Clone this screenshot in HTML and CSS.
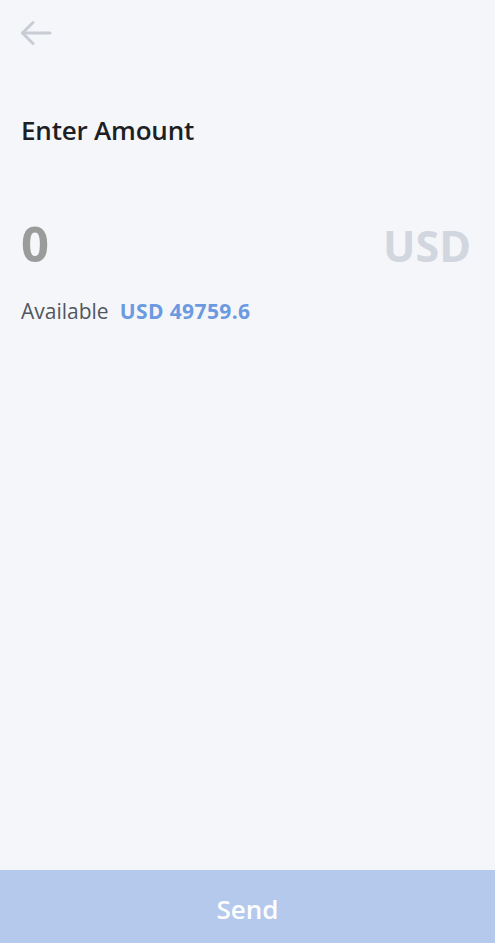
FILE: index.html
```html
<!DOCTYPE html>
<html>
<head>
<meta charset="utf-8">
<link rel="stylesheet" href="styles.css">
</head>
<body>
<div class="screen">
  <header class="top">
    <button class="back" aria-label="Back">
      <svg width="34" height="28" viewBox="0 0 34 28" fill="none" stroke="#c9ccd5" stroke-width="3" stroke-linecap="round" stroke-linejoin="round">
        <path d="M31 14H3.5"/>
        <path d="M14 3.5L3.5 14L14 24.5"/>
      </svg>
    </button>
  </header>
  <main class="content">
    <h1 class="title">Enter Amount</h1>
    <div class="amount-row">
      <span class="amount">0</span>
      <span class="currency">USD</span>
    </div>
    <p class="available"><span class="label">Available</span><span class="value">USD 49759.6</span></p>
  </main>
  <button class="send">Send</button>
</div>
</body>
</html>
```
FILE: styles.css
```css
html, body {
  margin: 0;
  padding: 0;
  height: 100%;
}
body {
  background: #f5f6fa;
  font-family: "Open Sans", "Noto Sans", sans-serif;
}
.screen {
  display: flex;
  flex-direction: column;
  height: 943px;
}
.top {
  padding: 19px 0 0 19px;
  height: 46px;
  box-sizing: border-box;
}
.back {
  border: 0;
  background: none;
  padding: 0;
  display: block;
}
.content {
  flex: 1;
  padding: 0 24px 0 21px;
}
.title {
  margin: 68px 0 0;
  font-size: 26px;
  line-height: 32px;
  font-weight: 600;
  color: #1d1f25;
  letter-spacing: -0.2px;
}
.amount-row {
  display: flex;
  justify-content: space-between;
  align-items: baseline;
  margin-top: 73px;
  line-height: 1;
}
.amount {
  font-size: 49px;
  font-weight: 700;
  color: #9b9b9b;
}
.currency {
  font-size: 43px;
  font-weight: 700;
  color: #d2d6df;
}
.available {
  margin: 30px 0 0;
  font-size: 21px;
  line-height: 26px;
  color: #52565e;
  display: flex;
  gap: 11px;
}
.value {
  color: #6c9ae0;
  font-weight: 700;
  letter-spacing: 0.4px;
}
.send {
  height: 73px;
  border: 0;
  padding: 4px 0 0;
  background: #b4c9eb;
  color: #ffffff;
  font-family: inherit;
  font-size: 26px;
  font-weight: 600;
  width: 100%;
  flex: none;
}
```
